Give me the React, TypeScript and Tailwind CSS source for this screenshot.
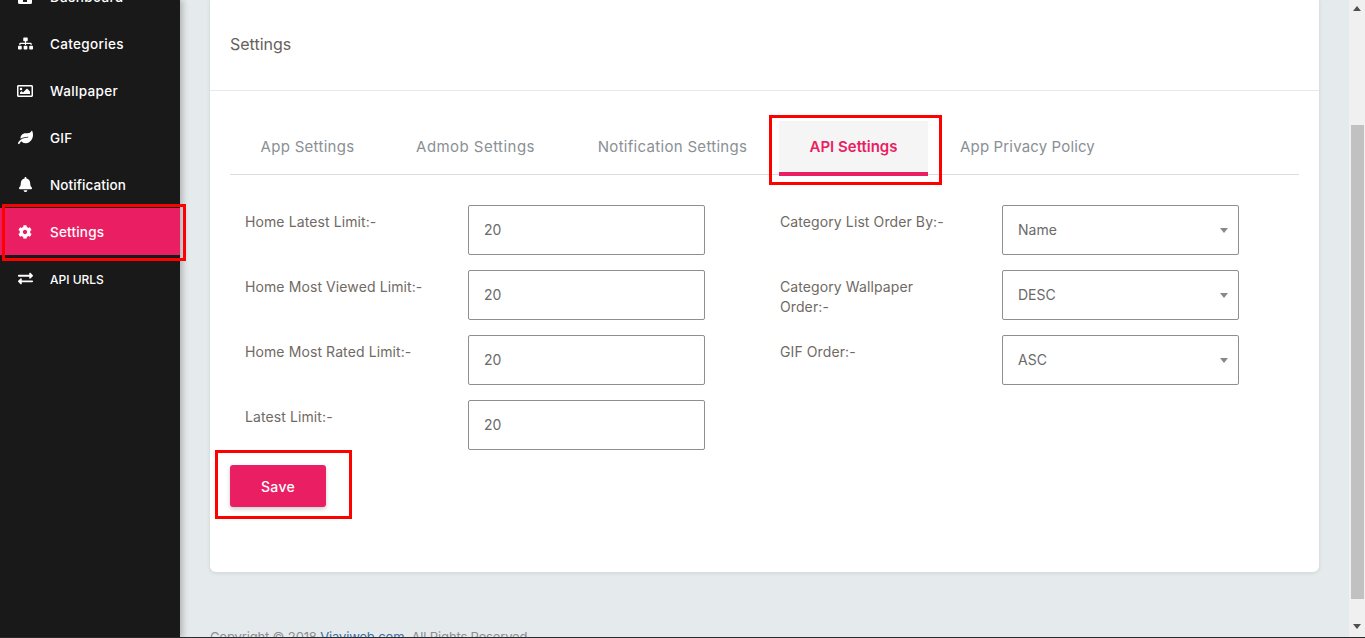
import React from "react";
import { FaSitemap, FaRegImage, FaLeaf, FaBell, FaCog, FaExchangeAlt } from "react-icons/fa";

const icons: Record<string, React.ReactNode> = {
  Dashboard: (
    <svg width="16" height="14" viewBox="0 0 16 14" fill="#fff" fillRule="evenodd">
      <path d="M1 1.500A1.500 1.500 0 0 1 2.500 0h11A1.500 1.500 0 0 1 15 1.500v11a1.500 1.500 0 0 1-1.500 1.500h-11A1.500 1.500 0 0 1 1 12.500zM6 9v3h4V9z" />
    </svg>
  ),
  Categories: <FaSitemap size={15} color="#fff" />,
  Wallpaper: <FaRegImage size={16} color="#fff" />,
  GIF: <FaLeaf size={15} color="#fff" />,
  Notification: <FaBell size={15} color="#fff" />,
  Settings: <FaCog size={14} color="#fff" />,
  "API URLS": <FaExchangeAlt size={15} color="#fff" />,
};

const nav = [
  { n: "Dashboard", c: "text-[13.5px] tracking-[0.35px]" },
  { n: "Categories", c: "text-[13.5px] tracking-[0.35px]" },
  { n: "Wallpaper", c: "text-[13.5px] tracking-[0.35px]" },
  { n: "GIF", c: "text-[13.5px] tracking-[0.2px]" },
  { n: "Notification", c: "text-[13.5px] tracking-[0.1px]" },
  { n: "Settings", c: "text-[13.5px] tracking-[0.2px]" },
  { n: "API URLS", c: "text-[12px]" },
];

const tabs = [
  { t: "App Settings", w: "w-[155px] tracking-[0.3px]" },
  { t: "Admob Settings", w: "w-[181px] tracking-[0.45px]" },
  { t: "Notification Settings", w: "w-[213px] tracking-[0.3px]" },
  { t: "API Settings", w: "w-[149px]" },
  { t: "App Privacy Policy", w: "ml-[1px] w-[197px] tracking-[0.15px]" },
];
const leftFields = ["Home Latest Limit:-", "Home Most Viewed Limit:-", "Home Most Rated Limit:-", "Latest Limit:-"];
const rightFields = [
  ["Category List Order By:-", "Name"],
  ["Category Wallpaper Order:-", "DESC"],
  ["GIF Order:-", "ASC"],
];

function Box({ children }: { children: React.ReactNode }) {
  return (
    <div className="relative flex h-[50px] w-[237px] shrink-0 items-center rounded-[2px] border border-[#8f8f8f] bg-white pb-[1px] pl-[15px] text-[14px] text-[#6a6a6a]">
      {children}
    </div>
  );
}

export default function App() {
  return (
    <div className="relative flex h-[638px] w-[1365px] overflow-hidden bg-[#e5eaed] font-['Inter','Liberation_Sans',sans-serif]">
      <aside className="z-10 h-full w-[180px] shrink-0 bg-[#191919] shadow-[3px_0_6px_rgba(0,0,0,0.22)]">
        <nav className="mt-[-27px] flex flex-col">
          {nav.map(({ n, c }) => (
            <div
              key={n}
              className={`flex h-[47px] items-center font-medium text-white ${c} ${n === "Settings" ? "bg-[#e91e63]" : ""}`}
            >
              <span className="flex w-[50px] shrink-0 justify-center">{icons[n]}</span>
              <span className="pt-[2px]">{n}</span>
            </div>
          ))}
        </nav>
      </aside>

      <main className="flex min-w-0 flex-1 flex-col pl-[30px] pr-[30px]">
        <section className="mt-[-4px] h-[576px] w-[1109px] shrink-0 rounded-[6px] bg-white shadow-[0_1px_4px_rgba(0,0,0,0.1)]">
          <header className="flex h-[95px] items-center border-b border-[#e5e9ec] pl-[20px] pt-[1px] text-[16px] text-[#66615b]">
            Settings
          </header>
          <div className="px-[20px]">
            <div className="flex h-[84px] items-end border-b border-[#dddddd]">
              {tabs.map(({ t, w }) => (
                <div
                  key={t}
                  className={
                    t === "API Settings"
                      ? `mb-[-2px] flex h-[55px] items-center justify-center border-b-[4px] border-[#e91e63] bg-[#f5f5f5] pt-[2px] text-[15px] font-semibold text-[#e91e63] ${w}`
                      : `flex h-[55px] items-center justify-center pt-[2px] text-[15px] text-[#8a9095] ${w}`
                  }
                >
                  {t}
                </div>
              ))}
            </div>

            <div className="mt-[30px] flex">
              <div className="flex w-[550px] flex-col gap-[15px] pl-[15px]">
                {leftFields.map((l) => (
                  <div key={l} className="flex">
                    <label className="w-[223px] shrink-0 pt-[7px] text-[14px] leading-[20px] tracking-[0.1px] text-[#6f6a64]">{l}</label>
                    <Box>20</Box>
                  </div>
                ))}
              </div>
              <div className="flex flex-col gap-[15px]">
                {rightFields.map(([l, v]) => (
                  <div key={l} className="flex">
                    <label className="w-[222px] shrink-0 pr-[50px] pt-[7px] text-[14px] leading-[20px] tracking-[0.1px] text-[#6f6a64]">{l}</label>
                    <Box>
                      {v}
                      <span className="absolute right-[10px] top-[22px] h-0 w-0 border-x-[4px] border-t-[5px] border-x-transparent border-t-[#888888]" />
                    </Box>
                  </div>
                ))}
              </div>
            </div>

            <button className="mt-[15px] flex h-[42px] w-[96px] items-center justify-center rounded-[3px] bg-[#e91e63] text-[14px] font-medium tracking-[0.3px] text-white shadow-[0_2px_4px_rgba(0,0,0,0.2)]">
              Save
            </button>
          </div>
        </section>
        <footer className="mt-[55px] whitespace-nowrap text-[13px] leading-[20px] tracking-[-0.15px] text-[#8a8f94]">
          Copyright © 2018 <span className="text-[#3a6ea5]">Viaviweb.com</span>. All Rights Reserved.
        </footer>
      </main>

      <div className="flex h-full w-[16px] shrink-0 flex-col items-center bg-[#f0f0f0]">
        <span className="mt-[6px] h-0 w-0 border-x-[4px] border-b-[5px] border-x-transparent border-b-[#505050]" />
        <span className="mt-[114px] h-[474px] w-[13px] bg-[#c1c1c1]" />
        <span className="mt-[25px] h-0 w-0 border-x-[4px] border-t-[5px] border-x-transparent border-t-[#505050]" />
      </div>

      <div className="pointer-events-none absolute left-[2px] top-[204px] z-20 h-[57px] w-[184px] border-[3px] border-[#ff0000]" />
      <div className="pointer-events-none absolute left-[769px] top-[115px] z-20 h-[70px] w-[173px] border-[3px] border-[#ff0000]" />
      <div className="pointer-events-none absolute left-[215px] top-[450px] z-20 h-[69px] w-[137px] border-[3px] border-[#ff0000]" />
      <div className="absolute bottom-0 left-0 z-30 h-[1px] w-full bg-[#2a2a2a]" />
    </div>
  );
}
